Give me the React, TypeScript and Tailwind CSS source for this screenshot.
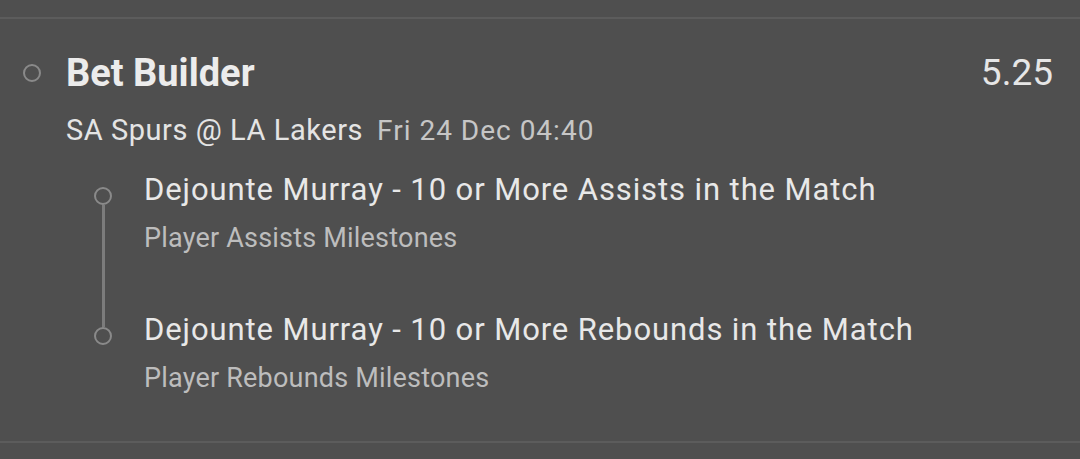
const legs = [
  {
    title: "Dejounte Murray - 10 or More Assists in the Match",
    market: "Player Assists Milestones",
  },
  {
    title: "Dejounte Murray - 10 or More Rebounds in the Match",
    market: "Player Rebounds Milestones",
  },
];

function Ring({ className = "" }: { className?: string }) {
  return (
    <div
      className={`w-[18px] h-[18px] shrink-0 rounded-full border-2 border-[#8a8a8a] ${className}`}
    />
  );
}

export default function App() {
  return (
    <div
      className="w-[1080px] h-[459px] bg-[#4f4f4f] overflow-hidden flex flex-col"
      style={{ fontFamily: "Roboto, 'Noto Sans', sans-serif" }}
    >
      <div className="h-[17px] shrink-0" />
      <div className="border-t-2 border-[#5c5c5c] h-[424px] shrink-0 pl-[23px] pr-[27px] pt-[31px]">
        <div className="flex items-center">
          <Ring />
          <div className="ml-[25px] flex-1 text-[38px] leading-[46px] font-bold text-[#ececec]">
            Bet Builder
          </div>
          <div className="text-[37px] leading-[46px] text-[#e6e6e6]">5.25</div>
        </div>

        <div className="ml-[43px] mt-[17px] flex items-baseline leading-[34px]">
          <span className="text-[29px] tracking-[0.55px] text-[#e4e4e4]">SA Spurs @ LA Lakers</span>
          <span className="ml-[14px] text-[28px] tracking-[1px] text-[#c6c6c6]">Fri 24 Dec 04:40</span>
        </div>

        <div className="ml-[71px] mt-[24px]">
          {legs.map((leg, i) => (
            <div key={i} className={`flex ${i === 0 ? "h-[140px]" : ""}`}>
              <div className="w-[18px] flex flex-col items-center pt-[15px]">
                <Ring />
                {i === 0 && <div className="w-[3px] flex-1 bg-[#7c7c7c] mb-[-15px]" />}
              </div>
              <div className="ml-[32px]">
                <div className="text-[31px] leading-[36px] tracking-[0.9px] text-[#e8e8e8]">
                  {leg.title}
                </div>
                <div className="mt-[14px] text-[27px] leading-[32px] tracking-[0.2px] text-[#bdbdbd]">
                  {leg.market}
                </div>
              </div>
            </div>
          ))}
        </div>
      </div>
      <div className="border-t-2 border-[#5c5c5c] flex-1" />
    </div>
  );
}
